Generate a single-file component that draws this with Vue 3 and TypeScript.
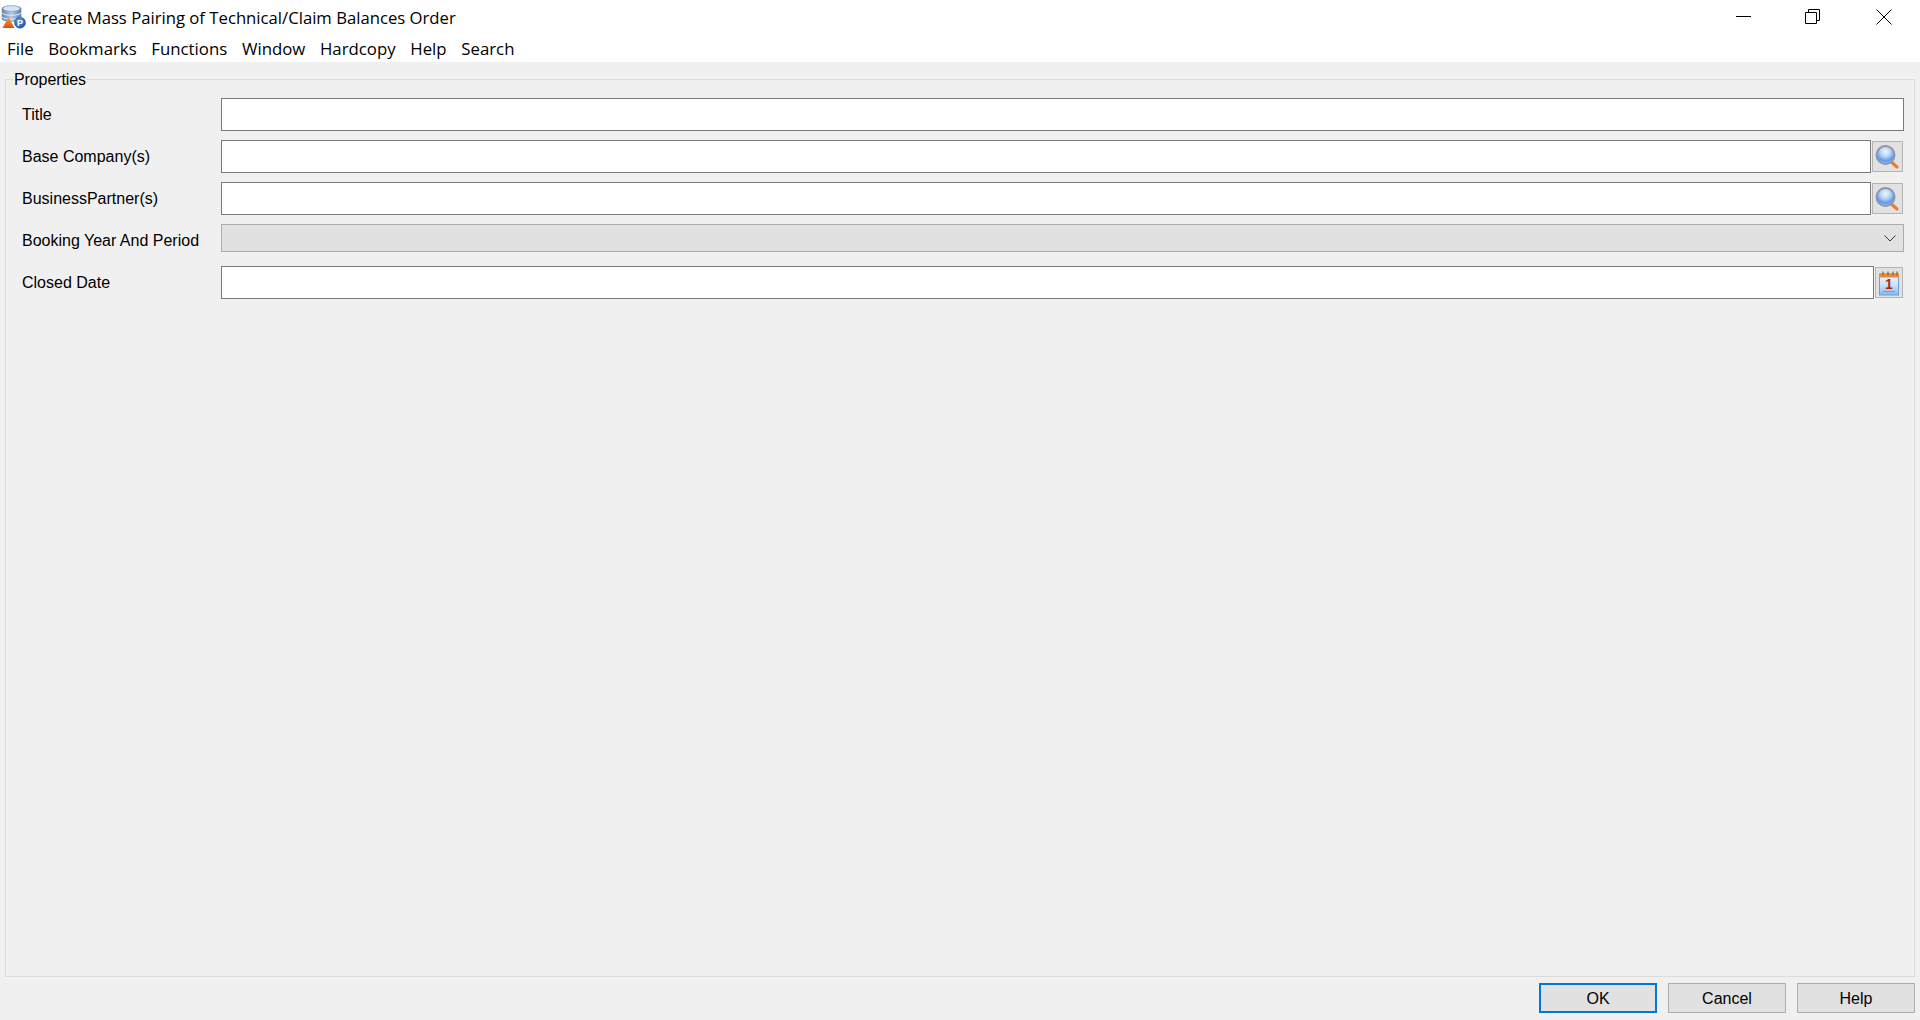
<script setup lang="ts">
const menus: string[] = ['File', 'Bookmarks', 'Functions', 'Window', 'Hardcopy', 'Help', 'Search']
const actions: { label: string; primary?: boolean }[] = [
  { label: 'OK', primary: true },
  { label: 'Cancel' },
  { label: 'Help' },
]
</script>

<template>
  <div class="window">
    <header class="titlebar">
      <svg class="app-icon" width="26" height="26" viewBox="0 0 26 26">
        <defs>
          <linearGradient id="cyl" x1="0" y1="0" x2="1" y2="0">
            <stop offset="0" stop-color="#5f86b8" />
            <stop offset="0.5" stop-color="#b5cbe4" />
            <stop offset="1" stop-color="#5e7fa8" />
          </linearGradient>
          <radialGradient id="pball" cx="0.4" cy="0.3" r="0.8">
            <stop offset="0" stop-color="#5a9be8" />
            <stop offset="1" stop-color="#1a4fa8" />
          </radialGradient>
          <linearGradient id="tri" x1="0" y1="0" x2="0" y2="1">
            <stop offset="0" stop-color="#f6a13c" />
            <stop offset="1" stop-color="#dd4f12" />
          </linearGradient>
        </defs>
        <path d="M1 3.500 C1 0 20 0 20 3.500 V14 C20 17 1 17 1 14 Z" fill="url(#cyl)" stroke="#6f7f94" stroke-width="0.6" />
        <ellipse cx="10.500" cy="3.500" rx="8.500" ry="2.800" fill="#d4e4f5" stroke="#8aa5c6" stroke-width="0.6" />
        <path d="M1 8 C3 11 18 11 20 8 M1 12 C3 15 18 15 20 12" fill="none" stroke="#e6eef8" stroke-width="1" />
        <path d="M7.500 12 L13.500 23 H1.500 Z" fill="url(#tri)" />
        <circle cx="19" cy="17.700" r="5.500" fill="url(#pball)" stroke="#123f88" stroke-width="0.5" />
        <text x="19" y="21" class="app-p" text-anchor="middle">P</text>
      </svg>
      <span class="title-text">Create Mass Pairing of Technical/Claim Balances Order</span>
      <div class="win-controls">
        <svg class="min-icon" width="16" height="16" viewBox="0 0 16 16"><path d="M0 7.500 H15" stroke="#000" fill="none" /></svg>
        <svg width="16" height="16" viewBox="0 0 16 16"><path d="M0.500 3.500 H11.500 V14.500 H0.500 Z M3.500 3.500 V0.500 H14.500 V11.500 H11.500" stroke="#000" fill="none" /></svg>
        <svg width="16" height="16" viewBox="0 0 16 16"><path d="M0.500 0.500 L15.500 15.500 M15.500 0.500 L0.500 15.500" stroke="#000" stroke-width="1" fill="none" /></svg>
      </div>
    </header>

    <nav class="menubar">
      <span v-for="m in menus" :key="m" class="menu-item">{{ m }}</span>
    </nav>

    <main class="content">
      <fieldset class="group">
        <legend class="legend">Properties</legend>
        <div class="form">
          <label class="label">Title</label>
          <div class="field"><input class="input" type="text" /></div>

          <label class="label">Base Company(s)</label>
          <div class="field">
            <input class="input" type="text" />
            <button class="icon-btn" type="button">
              <svg width="29" height="29" viewBox="0.500 0 29 29">
                <defs>
                  <radialGradient id="lens1" cx="0.5" cy="0.32" r="0.72">
                    <stop offset="0" stop-color="#f2f7fe" />
                    <stop offset="0.4" stop-color="#b6d2f6" />
                    <stop offset="0.72" stop-color="#5b98ec" />
                    <stop offset="1" stop-color="#cfe0f6" />
                  </radialGradient>
                </defs>
                <path d="M18 19 L21 22" stroke="#8d8f9c" stroke-width="3" />
                <path d="M20.500 21.500 L24.500 25" stroke="#ea7d34" stroke-width="3" stroke-linecap="round" />
                <circle cx="13" cy="13" r="9" fill="url(#lens1)" stroke="#8d95ae" stroke-width="2" />
              </svg>
            </button>
          </div>

          <label class="label">BusinessPartner(s)</label>
          <div class="field">
            <input class="input" type="text" />
            <button class="icon-btn" type="button">
              <svg width="29" height="29" viewBox="0.500 0 29 29">
                <path d="M18 19 L21 22" stroke="#8d8f9c" stroke-width="3" />
                <path d="M20.500 21.500 L24.500 25" stroke="#ea7d34" stroke-width="3" stroke-linecap="round" />
                <circle cx="13" cy="13" r="9" fill="url(#lens1)" stroke="#8d95ae" stroke-width="2" />
              </svg>
            </button>
          </div>

          <label class="label">Booking Year And Period</label>
          <div class="field">
            <div class="select">
              <svg width="12" height="7" viewBox="0 0 12 7"><path d="M0.500 0.500 L6 6 L11.500 0.500" stroke="#333" fill="none" /></svg>
            </div>
          </div>

          <label class="label">Closed Date</label>
          <div class="field">
            <input class="input" type="text" />
            <button class="icon-btn icon-btn-narrow" type="button">
              <svg width="23" height="26" viewBox="1 0 23 26">
                <defs>
                  <linearGradient id="page" x1="0" y1="0" x2="0" y2="1">
                    <stop offset="0" stop-color="#eef6fd" />
                    <stop offset="0.5" stop-color="#cfe4f8" />
                    <stop offset="1" stop-color="#86bbec" />
                  </linearGradient>
                </defs>
                <rect x="2.500" y="4" width="19" height="21" fill="url(#page)" stroke="#6f9fd0" />
                <rect x="2" y="3.500" width="20" height="4" fill="#ed8a35" />
                <path d="M6 1.500 V5.500 M11 1.500 V5.500 M16 1.500 V5.500 M20 1.500 V5.500" stroke="#7c6a56" stroke-width="1.300" />
                <text x="12" y="18.500" class="cal-num" text-anchor="middle">1</text>
                <path d="M6 21.500 H18" stroke="#6f9fd0" />
              </svg>
            </button>
          </div>
        </div>
      </fieldset>

      <footer class="actions">
        <button
          v-for="a in actions"
          :key="a.label"
          class="btn"
          :class="{ 'btn-primary': a.primary }"
          type="button"
        >{{ a.label }}</button>
      </footer>
    </main>
  </div>
</template>

<style>
html, body { margin: 0; padding: 0; background: #f0f0f0; overflow: hidden; }
</style>

<style scoped>
.window {
  width: 1920px;
  height: 1020px;
  display: flex;
  flex-direction: column;
  background: #f0f0f0;
  color: #000;
  font-family: "Liberation Sans", Arial, sans-serif;
  overflow: hidden;
}
.titlebar {
  height: 35px;
  flex: none;
  background: #fff;
  display: flex;
  align-items: center;
  padding-left: 1px;
  box-sizing: border-box;
}
.app-icon { flex: none; margin-top: 1px; }
.title-text {
  font-family: "Open Sans", "Noto Sans", sans-serif;
  font-size: 16.700px;
  margin-left: 4px;
  white-space: nowrap;
}
.win-controls {
  margin-left: auto;
  display: flex;
  gap: 55px;
  padding-right: 28px;
  margin-top: -1px;
}
.min-icon { margin-right: -2px; }
.menubar {
  height: 27px;
  flex: none;
  background: #fff;
  display: flex;
  align-items: center;
  gap: 14.700px;
  padding-left: 7px;
  font-family: "Open Sans", "Noto Sans", sans-serif;
  font-size: 16.800px;
  box-sizing: border-box;
}
.content {
  flex: 1;
  min-height: 0;
  display: flex;
  flex-direction: column;
  padding: 10px 5px 7px 5px;
}
.group {
  flex: 1;
  min-height: 0;
  margin: 0;
  padding: 0 10px 0 16px;
  border: 1px solid #dcdcdc;
  box-sizing: border-box;
  min-width: 0;
}
.legend {
  margin-left: -9px;
  padding: 1px 0 0 1px;
  font-size: 16px;
  line-height: 14px;
  letter-spacing: -0.100px;
}
.form {
  display: grid;
  grid-template-columns: 199px 1fr;
  grid-auto-rows: 33px;
  row-gap: 9px;
  margin-top: 11px;
  align-items: center;
}
.label {
  font-size: 16px;
  white-space: nowrap;
}
.field {
  display: flex;
  height: 33px;
  gap: 1px;
  align-items: flex-start;
}
.input {
  flex: 1;
  min-width: 0;
  height: 33px;
  box-sizing: border-box;
  border: 1px solid #7a7a7a;
  background: #fff;
  padding: 0;
  outline: none;
  border-radius: 0;
}
.icon-btn {
  flex: none;
  width: 31px;
  height: 31px;
  margin-top: 1px;
  margin-right: 1px;
  box-sizing: border-box;
  border: 1px solid #b4b4b4;
  background: #e1e1e1;
  padding: 0;
  display: flex;
  align-items: center;
  justify-content: center;
}
.icon-btn-narrow { width: 28px; }
.select {
  flex: 1;
  height: 28px;
  box-sizing: border-box;
  border: 1px solid #adadad;
  background: #e1e1e1;
  display: flex;
  align-items: center;
  justify-content: flex-end;
  padding-right: 7px;
}
.actions {
  flex: none;
  display: flex;
  justify-content: flex-end;
  gap: 11px;
  margin-top: 6px;
}
.btn {
  width: 118px;
  height: 30px;
  box-sizing: border-box;
  border: 1px solid #adadad;
  background: #e1e1e1;
  font-family: "Liberation Sans", Arial, sans-serif;
  font-size: 16px;
  color: #000;
  padding: 1px 0 0;
}
.btn-primary {
  border: 2px solid #0078d7;
}
.app-p {
  font-family: "Liberation Sans", Arial, sans-serif;
  font-weight: 700;
  font-size: 9px;
  fill: #fff;
}
.cal-num {
  font-family: "Liberation Sans", Arial, sans-serif;
  font-weight: 700;
  font-size: 14px;
  fill: #a8281c;
}
</style>
